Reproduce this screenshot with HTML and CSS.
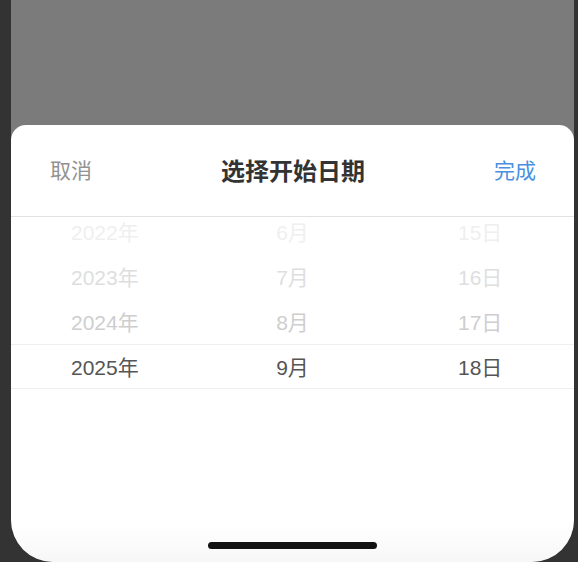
FILE: index.html
```html
<!DOCTYPE html>
<html lang="zh-CN">
<head>
<meta charset="utf-8">
<title>选择开始日期</title>
<link rel="stylesheet" href="styles.css">
</head>
<body>
<div class="screen">
  <div class="sheet">
    <div class="header">
      <span class="cancel">取消</span>
      <span class="title">选择开始日期</span>
      <span class="done">完成</span>
    </div>
    <div class="picker">
      <div class="columns">
        <ul class="col">
          <li class="f3">2022年</li>
          <li class="f2">2023年</li>
          <li class="f1">2024年</li>
          <li class="sel">2025年</li>
        </ul>
        <ul class="col">
          <li class="f3">6月</li>
          <li class="f2">7月</li>
          <li class="f1">8月</li>
          <li class="sel">9月</li>
        </ul>
        <ul class="col">
          <li class="f3">15日</li>
          <li class="f2">16日</li>
          <li class="f1">17日</li>
          <li class="sel">18日</li>
        </ul>
      </div>
      <div class="indicator"></div>
    </div>
    <div class="home-bar"></div>
  </div>
</div>
</body>
</html>
```

FILE: styles.css
```css
html, body {
  margin: 0;
  padding: 0;
}
body {
  width: 578px;
  height: 562px;
  background: #333333;
  overflow: hidden;
  font-family: "Liberation Sans", "Noto Sans CJK SC", sans-serif;
}
.screen {
  margin-left: 11px;
  width: 563px;
  height: 562px;
  background: #7b7b7b;
  border-radius: 0 0 42px 42px;
  overflow: hidden;
  display: flex;
  flex-direction: column;
  justify-content: flex-end;
}
.sheet {
  position: relative;
  height: 437px;
  background: linear-gradient(to bottom, #ffffff 0, #ffffff 400px, #f7f7f7 437px);
  border-radius: 15px 15px 0 0;
  display: flex;
  flex-direction: column;
}
.header {
  height: 92px;
  flex: none;
  border-bottom: 1px solid #e2e2e2;
  display: flex;
  align-items: center;
  justify-content: space-between;
  padding: 0 38px 3px 39px;
  box-sizing: border-box;
}
.cancel {
  font-size: 21px;
  color: #929292;
}
.title {
  font-size: 24px;
  font-weight: bold;
  color: #333333;
}
.done {
  font-size: 21px;
  color: #4a8fe0;
}
.picker {
  position: relative;
  height: 300px;
  overflow: hidden;
}
.columns {
  display: flex;
  margin-top: -7px;
}
.col {
  flex: 1;
  list-style: none;
  margin: 0;
  padding: 0;
}
.col li {
  height: 45px;
  box-sizing: border-box;
  padding-bottom: 4px;
  display: flex;
  align-items: center;
  justify-content: center;
  font-size: 21px;
}
.col .f3 { color: #efefef; }
.col .f2 { color: #dedede; }
.col .f1 { color: #cecece; }
.col .sel { color: #555555; }
.indicator {
  position: absolute;
  left: 0;
  right: 0;
  top: 127px;
  height: 43px;
  border-top: 1px solid #eeeeee;
  border-bottom: 1px solid #eeeeee;
  pointer-events: none;
}
.home-bar {
  position: absolute;
  left: 197px;
  bottom: 13px;
  width: 169px;
  height: 7px;
  border-radius: 4px;
  background: #111111;
}
```
